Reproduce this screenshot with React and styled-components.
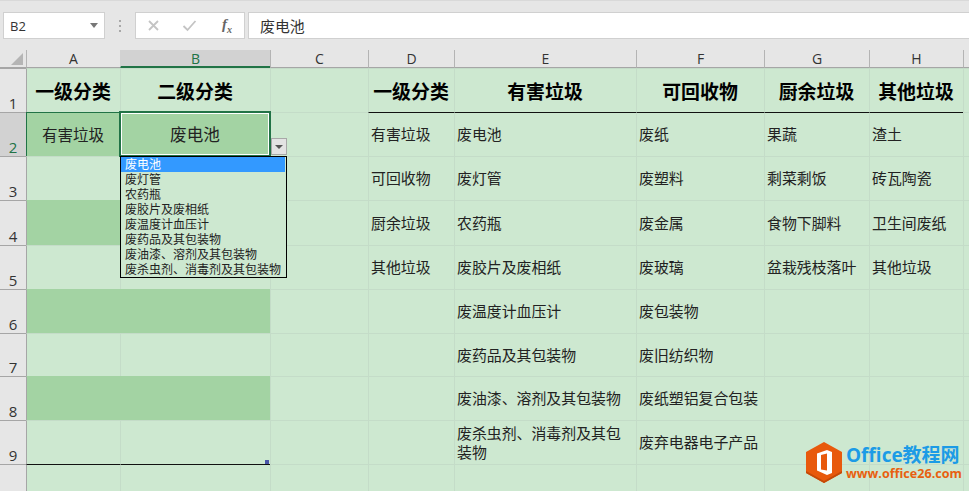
import React from "react";
import styled, { createGlobalStyle } from "styled-components";

const Global = createGlobalStyle`
  html, body { margin: 0; padding: 0; background: #e6e6e6; }
  * { box-sizing: border-box; }
`;
const CJK = `"Noto Sans CJK SC", "Liberation Sans", sans-serif`;
const LAT = `"Open Sans", "Liberation Sans", sans-serif`;

const Page = styled.div`
  position: relative;
  width: 969px;
  height: 491px;
  overflow: hidden;
  background: #e6e6e6;
`;
const Toolbar = styled.div`
  height: 50px;
  display: flex;
  align-items: flex-start;
  padding: 11px 0 0 3px;
  border-top: 1px solid #d9d9d9;
  background: #e6e6e6;
`;
const NameBox = styled.div`
  width: 102px;
  height: 27px;
  background: #fff;
  border: 1px solid #d0d0d0;
  display: flex;
  align-items: center;
  justify-content: space-between;
  padding: 0 6px;
  font: 13px ${LAT};
  color: #333;
`;
const Caret = styled.span`
  width: 0;
  height: 0;
  border-left: 4px solid transparent;
  border-right: 4px solid transparent;
  border-top: 5px solid #777;
`;
const Dots = styled.div`
  width: 30px;
  height: 27px;
  display: flex;
  flex-direction: column;
  align-items: center;
  justify-content: center;
  gap: 3px;
  i { width: 2px; height: 2px; background: #a8a8a8; display: block; }
`;
const FxBox = styled.div`
  width: 110px;
  height: 27px;
  background: #fff;
  border: 1px solid #d0d0d0;
  display: flex;
  align-items: center;
  padding-left: 11px;
  gap: 22px;
`;
const Fx = styled.span`
  font: italic bold 15px "Liberation Serif", serif;
  color: #666;
  margin-left: 3px;
  sub { font-size: 10px; }
`;
const FormulaBar = styled.div`
  flex: 1;
  height: 27px;
  margin-left: 3px;
  background: #fff;
  border: 1px solid #d0d0d0;
  border-right: none;
  display: flex;
  align-items: center;
  padding: 0 0 1px 11px;
  font: 14.9px ${CJK};
  color: #333;
`;
const Sheet = styled.div`
  position: relative;
  display: grid;
  grid-template-columns: 26px 94px 150px 98px 86px 182px 128px 105px 94px 6px;
  grid-template-rows: 18px 44px 44px 44px 45px 44px 44px 43px 44px 44px 27px;
`;
const Corner = styled.div`
  background: #e6e6e6;
  border-bottom: 1px solid #a6a6a6;
  display: flex;
  align-items: flex-end;
  justify-content: flex-end;
  padding: 0 3px 2px 0;
`;
const ColHead = styled.div`
  background: ${(p) => (p.$on ? "#d2d2d2" : "#e6e6e6")};
  color: ${(p) => (p.$on ? "#217346" : "#333")};
  border-left: 1px solid ${(p) => (p.$on ? "#d2d2d2" : "#b4b4b4")};
  border-bottom: ${(p) => (p.$on ? "2px solid #217346" : "1px solid #a6a6a6")};
  font: 14px/18px ${LAT};
  text-align: center;
`;
const RowHead = styled.div`
  background: ${(p) => (p.$on ? "#d2d2d2" : "#e6e6e6")};
  color: ${(p) => (p.$on ? "#217346" : "#333")};
  border-top: 1px solid #a6a6a6;
  font: 15px/18px ${LAT};
  display: flex;
  align-items: flex-end;
  justify-content: center;
`;
const GRID = "#c4dcc8";
const Cell = styled.div`
  background: ${(p) => (p.$dark ? "#a3d3a3" : "#cde8d0")};
  border-left: 1px solid ${(p) => (p.$edge ? "#a6a6a6" : p.$dark ? "#a3d3a3" : GRID)};
  border-top: 1px solid ${(p) => (p.$rule ? "#111" : p.$dark ? "#a3d3a3" : GRID)};
  ${(p) => p.$active && "border-top-color: #217346; border-left-color: #217346;"}
  display: flex;
  align-items: center;
  justify-content: ${(p) => (p.$center ? "center" : "flex-start")};
  padding: ${(p) => (p.$center ? "0 1px 0 0" : "0 8px 2px 2px")};
  font: ${(p) => (p.$head ? 700 : 400)} ${(p) => p.$size ?? 14.9}px/19px ${CJK};
  color: ${(p) => (p.$head ? "#000" : "#222")};
  white-space: ${(p) => (p.$wrap ? "normal" : "nowrap")};
  text-align: ${(p) => (p.$center ? "center" : "left")};
`;
const Selection = styled.div`
  position: absolute;
  left: 119px;
  top: 61px;
  width: 152px;
  height: 46px;
  border: 2px solid #217346;
  box-shadow: inset 0 0 0 1px #fff;
  pointer-events: none;
`;
const DropButton = styled.div`
  position: absolute;
  left: 271px;
  top: 88px;
  width: 16px;
  height: 17px;
  background: #e3e3e3;
  border: 1px solid #a8a8a8;
  display: flex;
  align-items: center;
  justify-content: center;
`;
const DropCaret = styled.span`
  width: 0;
  height: 0;
  border-left: 4px solid transparent;
  border-right: 4px solid transparent;
  border-top: 4px solid #555;
`;
const DropList = styled.ul`
  position: absolute;
  left: 120px;
  top: 106px;
  width: 167px;
  height: 122px;
  margin: 0;
  padding: 0;
  list-style: none;
  background: #cde8d0;
  border: 1px solid #000;
`;
const DropItem = styled.li`
  height: 15px;
  padding-left: 4px;
  margin-right: 1px;
  font: 12px/14px ${CJK};
  white-space: nowrap;
  color: ${(p) => (p.$on ? "#fff" : "#222")};
  background: ${(p) => (p.$on ? "#3399ff" : "transparent")};
`;
const FillHandle = styled.div`
  position: absolute;
  left: 265px;
  top: 410px;
  width: 4px;
  height: 4px;
  background: #4a55a8;
`;
const Logo = styled.div`
  position: absolute;
  left: 806px;
  top: 442px;
  display: flex;
  align-items: center;
  gap: 4px;
`;
const LogoText = styled.div`
  display: flex;
  flex-direction: column;
`;
const LogoTitle = styled.span`
  font: 700 19px/22px "Open Sans", ${CJK};
  color: #1c9be6;
  white-space: nowrap;
`;
const LogoUrl = styled.span`
  font: 700 12.6px/15px "Open Sans", sans-serif;
  color: #e8600f;
  white-space: nowrap;
`;

const cols = ["A", "B", "C", "D", "E", "F", "G", "H", ""];
const rows = [
  ["一级分类", "二级分类", "", "一级分类", "有害垃圾", "可回收物", "厨余垃圾", "其他垃圾", ""],
  ["有害垃圾", "废电池", "", "有害垃圾", "废电池", "废纸", "果蔬", "渣土", ""],
  ["", "", "", "可回收物", "废灯管", "废塑料", "剩菜剩饭", "砖瓦陶瓷", ""],
  ["", "", "", "厨余垃圾", "农药瓶", "废金属", "食物下脚料", "卫生间废纸", ""],
  ["", "", "", "其他垃圾", "废胶片及废相纸", "废玻璃", "盆栽残枝落叶", "其他垃圾", ""],
  ["", "", "", "", "废温度计血压计", "废包装物", "", "", ""],
  ["", "", "", "", "废药品及其包装物", "废旧纺织物", "", "", ""],
  ["", "", "", "", "废油漆、溶剂及其包装物", "废纸塑铝复合包装", "", "", ""],
  ["", "", "", "", "废杀虫剂、消毒剂及其包装物", "废弃电器电子产品", "", "", ""],
  ["", "", "", "", "", "", "", "", ""],
];
const items = rows.slice(1, 9).map((r) => r[4]);

const cellSize = (r, c) => {
  if (r === 0) return 18.9;
  if (r === 1 && c === 0) return 15.5;
  if (r === 1 && c === 1) return 16.6;
  return 14.9;
};

export default function App() {
  return (
    <Page>
      <Global />
      <Toolbar>
        <NameBox>B2<Caret /></NameBox>
        <Dots><i /><i /><i /></Dots>
        <FxBox>
          <svg width="13" height="13" viewBox="0 0 13 13"><path d="M2 2l9 9M11 2l-9 9" stroke="#c4c4c4" strokeWidth="1.8" fill="none" /></svg>
          <svg width="15" height="13" viewBox="0 0 15 13"><path d="M1.5 7l4 4 8-9" stroke="#c4c4c4" strokeWidth="1.8" fill="none" /></svg>
          <Fx>f<sub>x</sub></Fx>
        </FxBox>
        <FormulaBar>废电池</FormulaBar>
      </Toolbar>
      <Sheet>
        <Corner>
          <svg width="12" height="12" viewBox="0 0 12 12"><path d="M12 0v12H0z" fill="#b5b5b5" /></svg>
        </Corner>
        {cols.map((c, i) => <ColHead key={i} $on={c === "B"}>{c}</ColHead>)}
        {rows.map((row, r) => (
          <React.Fragment key={r}>
            <RowHead $on={r === 1}>{r < 9 ? r + 1 : ""}</RowHead>
            {row.map((text, c) => {
              const leftTable = c < 2;
              return (
                <Cell
                  key={c}
                  $dark={leftTable && r >= 1 && r <= 8 && r % 2 === 1}
                  $edge={c === 0}
                  $rule={(r === 1 && c >= 3 && c <= 7) || (r === 9 && c < 2)}
                  $active={r === 1 && c === 0}
                  $head={r === 0}
                  $center={r === 0 || leftTable}
                  $size={cellSize(r, c)}
                  $wrap={c === 4}
                >
                  {text}
                </Cell>
              );
            })}
          </React.Fragment>
        ))}
        <Selection />
        <DropButton><DropCaret /></DropButton>
        <DropList>
          {items.map((t, i) => <DropItem key={t} $on={i === 0}>{t}</DropItem>)}
        </DropList>
        <FillHandle />
      </Sheet>
      <Logo>
        <svg width="36" height="41" viewBox="0 0 36 41">
          <path d="M18 0l18 10v21L18 41 0 31V10z" fill="#e8590c" />
          <path d="M0 31l18 10 18-10v-2L18 39 0 29z" fill="#c44a08" />
          <path d="M21 8l-10 3.5v17L21 33l5-2V10z" fill="#fff" />
          <path d="M15 13l6-1.5v17l-6-1z" fill="#e8590c" />
        </svg>
        <LogoText>
          <LogoTitle>Office教程网</LogoTitle>
          <LogoUrl>www.office26.com</LogoUrl>
        </LogoText>
      </Logo>
    </Page>
  );
}
